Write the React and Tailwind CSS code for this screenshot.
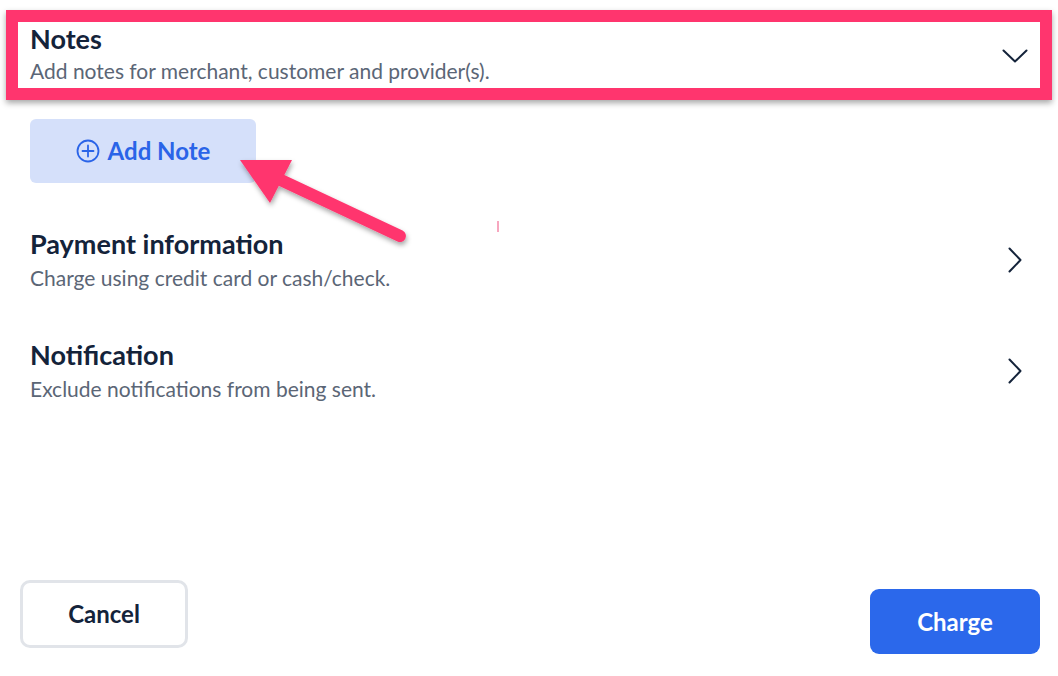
import React from "react";

function ChevronDown() {
  return (
    <svg width="26" height="16" viewBox="0 0 26 16" fill="none">
      <path d="M1.5 2.5 L13 13.5 L24.5 2.5" stroke="#14233a" strokeWidth="2" strokeLinecap="round" strokeLinejoin="round" />
    </svg>
  );
}

function ChevronRight() {
  return (
    <svg width="16" height="26" viewBox="0 0 16 26" fill="none">
      <path d="M2.5 1.5 L13.5 13 L2.5 24.5" stroke="#14233a" strokeWidth="2" strokeLinecap="round" strokeLinejoin="round" />
    </svg>
  );
}

function PlusCircle() {
  return (
    <svg width="24" height="24" viewBox="0 0 24 24" fill="none">
      <circle cx="12" cy="12" r="10.5" stroke="#2a64e8" strokeWidth="1.8" />
      <path d="M12 6.5 V17.5 M6.5 12 H17.5" stroke="#2a64e8" strokeWidth="1.8" strokeLinecap="round" />
    </svg>
  );
}

function Section({ title, subtitle }) {
  return (
    <div className="flex items-center justify-between pr-[35px]">
      <div className="flex flex-col">
        <div className="text-[27px] font-bold leading-[32px] text-[#14233a]">{title}</div>
        <div className="text-[21px] leading-[28px] text-[#5b6676] mt-[4px]">{subtitle}</div>
      </div>
      <ChevronRight />
    </div>
  );
}

export default function App() {
  return (
    <div
      className="relative w-[1058px] h-[676px] bg-white overflow-hidden flex flex-col"
      style={{ fontFamily: "Lato, 'Open Sans', sans-serif" }}
    >
      <div className="pt-[10px] pl-[6px] pr-[6px]">
        <div className="border-[12px] border-[#ff356e] shadow-[0_3px_6px_rgba(0,0,0,0.35)] flex items-center justify-between pl-[12px] pr-[12px] h-[90px]">
          <div className="flex flex-col -mt-[1px]">
            <div className="text-[27px] font-bold leading-[30px] text-[#14233a]">Notes</div>
            <div className="text-[21px] leading-[28px] text-[#5b6676] mt-[3px]">
              Add notes for merchant, customer and provider(s).
            </div>
          </div>
          <div className="mt-[2px]">
            <ChevronDown />
          </div>
        </div>
      </div>

      <div className="pl-[30px] pt-[19px]">
        <button className="w-[226px] h-[64px] rounded-[6px] bg-[#d5e0fa] flex items-center justify-center gap-[8px] text-[#2a64e8] text-[24px] font-bold">
          <PlusCircle />
          <span>Add Note</span>
        </button>
      </div>

      <div className="pl-[30px] pt-[45px] flex flex-col gap-[47px]">
        <Section title="Payment information" subtitle="Charge using credit card or cash/check." />
        <Section title="Notification" subtitle="Exclude notifications from being sent." />
      </div>

      <div className="mt-auto pb-[22px] pl-[20px] pr-[18px] flex items-start justify-between">
        <button className="w-[168px] h-[68px] rounded-[10px] border-[3px] border-[#e1e4e9] bg-white text-[#14233a] text-[24px] font-bold">
          Cancel
        </button>
        <button className="mt-[9px] w-[170px] h-[65px] rounded-[9px] bg-[#2b68eb] text-white text-[24px] font-bold">
          Charge
        </button>
      </div>

      {/* annotation arrow */}
      <svg
        className="absolute left-0 top-0 pointer-events-none"
        width="1058"
        height="676"
        viewBox="0 0 1058 676"
      >
        <defs>
          <filter id="sh" x="-20%" y="-20%" width="140%" height="140%">
            <feDropShadow dx="1" dy="3" stdDeviation="2.5" floodColor="#000" floodOpacity="0.35" />
          </filter>
        </defs>
        <g filter="url(#sh)">
          <line x1="400" y1="236" x2="268" y2="174" stroke="#ff356e" strokeWidth="12" strokeLinecap="round" />
          <polygon points="240,160 292,160 270,203" fill="#ff356e" />
        </g>
        <rect x="497" y="221" width="2" height="11" fill="#f7a7bf" />
      </svg>
    </div>
  );
}
